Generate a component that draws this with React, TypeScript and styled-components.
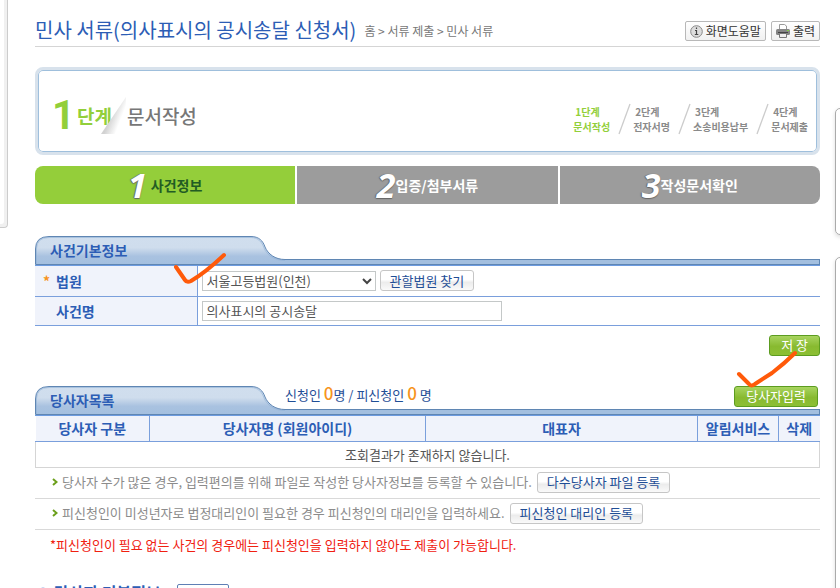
import React from "react";
import styled, { createGlobalStyle, css } from "styled-components";

const GlobalStyle = createGlobalStyle`
  * { box-sizing: border-box; }
  body {
    margin: 0;
    background: #fff;
    color: #555;
    font: 13px/18px "Noto Sans CJK KR", sans-serif;
  }
  button, input, select { font-family: inherit; }
  h1, h2, p, ol, ul { margin: 0; padding: 0; }
  ol, ul { list-style: none; }
`;

const Page = styled.div`
  display: grid;
  grid-template-columns: 8px minmax(0, 1fr) 5px;
  height: 100vh;
  overflow: hidden;
`;

const LeftRail = styled.aside`
  height: 228px;
  border: solid #ccc;
  border-width: 0 1px 1px 0;
  border-radius: 0 0 4px 0;
  box-shadow: inset -3px -3px 0 #f0f0f0;
`;

const RightRail = styled.aside`
  display: flex;
  flex-direction: column;
  gap: 22px;
  padding-top: 108px;
`;

const RailCard = styled.div<{ $fill?: boolean }>`
  width: 40px;
  height: 127px;
  border: 1px solid #aaa;
  border-radius: 5px;
  box-shadow: 0 2px 4px #ddd;
  ${(p) => p.$fill && css`flex: 1 0 340px;`}
`;

const Main = styled.main`
  min-width: 0;
  padding: 0 15px 0 27px;
`;

const TitleBar = styled.header`
  display: flex;
  align-items: center;
  height: 47px;
  padding-top: 14px;
  border-bottom: 1px solid #d5d5d5;
  white-space: nowrap;
`;

const Title = styled.h1`
  color: #2c5db5;
  font-size: 20px;
  font-weight: 400;
  line-height: 28px;
`;

const Crumbs = styled.nav`
  flex: 1;
  margin: 2px 0 0 8px;
  color: #777;
  font-size: 12px;
`;

const Tools = styled.div`
  display: flex;
  gap: 5px;
  padding-top: 2px;
`;

const ToolButton = styled.button`
  display: flex;
  align-items: center;
  gap: 3px;
  height: 20px;
  padding: 0 4px;
  border: 1px solid #b8b8b8;
  border-radius: 2px;
  background: linear-gradient(#fff, #f1f1f1);
  color: #333;
  font-size: 12px;
  line-height: 18px;
  white-space: nowrap;
`;

const StepPanel = styled.section`
  display: flex;
  align-items: center;
  justify-content: space-between;
  height: 88px;
  margin-top: 20px;
  padding: 10px 9px 0 14px;
  border: 3px solid #d8e2ec;
  border-radius: 8px;
  box-shadow: inset 0 0 0 1px #9fbfdc;
  white-space: nowrap;
`;

const CurrentStep = styled.div`
  display: flex;
  align-items: center;
  color: #777;
  font-size: 19px;
  font-weight: 500;
  line-height: 36px;
`;

const StepNumber = styled.span`
  margin-right: 2px;
  color: #92cf3a;
  font: 700 40px/36px Roboto, sans-serif;
`;

const StepWord = styled.strong`
  color: #92cf3a;
  font-weight: 700;
`;

const Fold = styled.svg`
  margin-left: -11px;
`;

const StepList = styled.ol`
  display: flex;
  align-items: center;
  padding-top: 6px;
`;

const StepDivider = styled.li`
  display: flex;
  padding: 0 2px 0 8px;
`;

const StepItem = styled.li<{ $active?: boolean }>`
  color: ${(p) => (p.$active ? "#92cf3a" : "#8a8a8a")};
  font-size: 10px;
  font-weight: 700;
  line-height: 15px;

  span { display: block; padding-left: 2px; }
`;

const WizardTabs = styled.nav`
  display: grid;
  grid-template-columns: repeat(3, 1fr);
  gap: 2px;
  margin-top: 11px;
`;

const WizardTab = styled.a<{ $active?: boolean }>`
  display: flex;
  align-items: center;
  justify-content: center;
  height: 38px;
  background: ${(p) => (p.$active ? "#94ce3a" : "#9c9c9c")};
  color: ${(p) => (p.$active ? "#225c24" : "#fff")};
  font-size: 14px;
  font-weight: 700;
  text-decoration: none;
  white-space: nowrap;

  &:first-child { border-radius: 8px 0 0 8px; }
  &:last-child { border-radius: 0 8px 8px 0; }
`;

const WizardNumber = styled.span<{ $wide?: boolean }>`
  margin-right: ${(p) => (p.$wide ? 4 : 0)}px;
  color: #fff;
  font: italic 700 34px/38px "Open Sans", sans-serif;
  text-shadow: -1px 0 1px #666, 0 1px 1px #666;
`;

const FirstSection = styled.section`
  margin-top: 32px;
`;

const SectionHead = styled.div`
  display: flex;
  height: 30px;
  border-bottom: 1px solid #6c9be0;
`;

const TabLabel = styled.div`
  position: relative;
  flex: none;
  width: 250px;

  svg { position: absolute; inset: 0; }
`;

const TabTitle = styled.h2`
  position: relative;
  padding: 5px 0 0 15px;
  color: #2c5db5;
  font-size: 14px;
  font-weight: 700;
  line-height: 18px;
`;

const HeadSide = styled.div`
  position: relative;
  display: flex;
  flex: 1;
  flex-direction: column;
  justify-content: flex-end;
  min-width: 0;
`;

const HeadRow = styled.div`
  display: flex;
  align-items: flex-start;
  justify-content: space-between;
  height: 23px;
  padding-right: 2px;
  color: #1f4e96;
  line-height: 14px;

  b { color: #f7941d; font-size: 17px; font-weight: 500; }
`;

const HeadBar = styled.div`
  height: 6px;
  border: solid #5f86b3;
  border-width: 1px 1px 1px 0;
  background: #a3bfdf;
`;

const FormTable = styled.table`
  width: 100%;
  border-collapse: collapse;

  th {
    width: 162px;
    padding: 0 0 0 8px;
    border-right: 1px solid #7a9fdc;
    border-bottom: 1px solid #7a9fdc;
    background: #f0f3fb;
    color: #2c5db5;
    font-size: 14px;
    font-weight: 700;
    text-align: left;
  }
  td {
    height: 30px;
    padding: 0 0 0 4px;
    border-bottom: 1px solid #7a9fdc;
  }
  tr + tr td { height: 29px; }
`;

const Mark = styled.span`
  display: inline-block;
  width: 13px;
  color: #f7941d;
`;

const Field = styled.div`
  position: relative;
  display: flex;
  align-items: center;
  gap: 4px;
`;

const fieldBox = css`
  height: 20px;
  border: 1px solid #c4c8c8;
  border-radius: 0;
  background: #fff;
  color: #555;
  font-size: 13px;
`;

const SelectWrap = styled.div`
  position: relative;
  width: 174px;

  svg { position: absolute; right: 4px; top: 7px; pointer-events: none; }
`;

const CourtSelect = styled.select`
  ${fieldBox}
  appearance: none;
  display: block;
  width: 100%;
  padding: 0 4px;
  line-height: 18px;
`;

const NameInput = styled.input`
  ${fieldBox}
  width: 300px;
  padding: 0 4px;
`;

const PlainButton = styled.button`
  height: 21px;
  padding: 0 9px;
  border: 1px solid #c6c6c6;
  border-radius: 3px;
  background: linear-gradient(#fff 0 45%, #ececec 60%, #fafafa);
  color: #1f4e96;
  font-size: 13px;
  line-height: 18px;
  white-space: nowrap;
`;

const GreenButton = styled.button`
  height: 21px;
  padding: 0 11px;
  border: 1px solid #5c9c20;
  border-radius: 3px;
  background: linear-gradient(#a8d460, #88ba30 55%, #8cbf34);
  color: #fff;
  font-size: 13px;
  line-height: 18px;
  white-space: nowrap;
`;

const SaveRow = styled.div`
  display: flex;
  justify-content: flex-end;
  height: 60px;
  padding-top: 9px;
`;

const Tick = styled.svg`
  position: absolute;
  z-index: 2;
  overflow: visible;
  pointer-events: none;
  fill: none;
  stroke: #ff5a0a;
  stroke-width: 4px;
  stroke-linecap: round;
  stroke-linejoin: round;
`;

const CourtTick = styled(Tick)`
  left: -28px;
  top: -18px;
`;

const EntryTick = styled(Tick)`
  right: 23px;
  top: -35px;
`;

const PartyTable = styled.table`
  width: 100%;
  table-layout: fixed;
  border-collapse: collapse;

  th {
    height: 26px;
    padding: 0;
    border-bottom: 1px solid #7a9fdc;
    background: #f0f3fb;
    color: #2c5db5;
    font-size: 14px;
    font-weight: 700;
    white-space: nowrap;
  }
  th + th { border-left: 1px solid #7a9fdc; }
  td {
    height: 26px;
    padding: 0;
    border: 1px solid #d5d5d5;
    border-top: 0;
    text-align: center;
  }
`;

const Hint = styled.li`
  display: flex;
  align-items: center;
  height: 31px;
  padding: 0 0 2px 17px;
  border-bottom: 1px solid #d9d9d9;
  color: #8c8c8c;
  white-space: nowrap;

  svg { margin-right: 4px; }
  button { margin-left: 5px; }
`;

const Notice = styled.p`
  padding: 6px 0 0 15px;
  color: #f02010;
`;

const NextSection = styled.div`
  display: flex;
  align-items: flex-start;
  gap: 16px;
  margin-top: 27px;
  padding-left: 3px;
  color: #2c5db5;
`;

const NextTitle = styled.h2`
  display: flex;
  align-items: center;
  gap: 6px;
  font-size: 16px;
  font-weight: 700;
  line-height: 22px;
`;

const SmallButton = styled.button`
  width: 52px;
  height: 20px;
  margin-top: 3px;
  border: 1px solid #5f7fb5;
  border-radius: 2px;
  background: #fff;
`;

function Slash() {
  return (
    <svg width="13" height="32" viewBox="0 0 13 32" aria-hidden="true">
      <path d="M1 31 L12 1" stroke="#ccc" strokeWidth="1.300" />
    </svg>
  );
}

function TabShape({ id }: { id: string }) {
  return (
    <svg width="250" height="29" viewBox="0 0 250 29" aria-hidden="true">
      <defs>
        <linearGradient id={id} x1="0" y1="0" x2="0" y2="1">
          <stop offset="0" stopColor="#d0deee" />
          <stop offset="0.4" stopColor="#cfdded" />
          <stop offset="0.7" stopColor="#a9c2e0" />
          <stop offset="1" stopColor="#a3bfdf" />
        </linearGradient>
      </defs>
      <path
        d="M.5 28.500 V13 Q.5 .5 14 .5 H216 C224 .5 228 5 230 11 C233 18 240 23.500 250 23.500 V28.500 Z"
        fill={`url(#${id})`}
      />
      <path
        d="M1.500 28 V13 Q1.500 1.500 14 1.500 H216 C223 1.500 227 6 229 12 C232 19 239 24.500 250 24.500"
        fill="none"
        stroke="#8fb0d6"
        strokeOpacity="0.6"
      />
      <path
        d="M250 28.500 H.5 V13 Q.5 .5 14 .5 H216 C224 .5 228 5 230 11 C233 18 240 23.500 250 23.500"
        fill="none"
        stroke="#5f86b3"
      />
    </svg>
  );
}

function Arrow() {
  return (
    <svg width="6" height="8" viewBox="0 0 6 8" aria-hidden="true">
      <path d="M1 1 L4.500 4 L1 7" fill="none" stroke="#6ca01c" strokeWidth="2" />
    </svg>
  );
}

const steps = ["문서작성", "전자서명", "소송비용납부", "문서제출"];
const wizard = ["사건정보", "입증/첨부서류", "작성문서확인"];

export default function App() {
  return (
    <>
      <GlobalStyle />
      <Page>
        <LeftRail />
        <Main>
          <TitleBar>
            <Title>민사 서류(의사표시의 공시송달 신청서)</Title>
            <Crumbs>홈 &gt; 서류 제출 &gt; 민사 서류</Crumbs>
            <Tools>
              <ToolButton>
                <svg width="13" height="13" viewBox="0 0 13 13" aria-hidden="true">
                  <circle cx="6.500" cy="6.500" r="5.800" fill="#ddd" stroke="#888" />
                  <path d="M6.500 2.500v1.500M5 5.500h1.500v4M4.800 9.500h3.500" fill="none" stroke="#444" strokeWidth="1.200" />
                </svg>
                화면도움말
              </ToolButton>
              <ToolButton>
                <svg width="14" height="14" viewBox="0 0 14 14" aria-hidden="true">
                  <path d="M3.500 6V.5h5L10.500 2v4" fill="#fff" stroke="#999" />
                  <rect y="5" width="14" height="6" rx="1.500" fill="#858585" />
                  <path d="M2 8.500h10" stroke="#444" />
                  <path d="M3.500 9.500h7v4h-7z" fill="#eee" stroke="#777" />
                  <path d="M11 6.500h2" stroke="#7fd040" />
                </svg>
                출력
              </ToolButton>
            </Tools>
          </TitleBar>

          <StepPanel>
            <CurrentStep>
              <StepNumber>1</StepNumber>
              <StepWord>단계</StepWord>
              <Fold width="26" height="38" viewBox="0 0 26 38" aria-hidden="true">
                <defs>
                  <linearGradient id="fold" x1="0.450" y1="0.400" x2="0.800" y2="0.600">
                    <stop offset="0" stopColor="#d2d2d2" />
                    <stop offset="1" stopColor="#fff" />
                  </linearGradient>
                </defs>
                <path d="M0 37 L25 0 V37 Z" fill="url(#fold)" />
              </Fold>
              문서작성
            </CurrentStep>
            <StepList>
              {steps.map((name, i) => (
                <React.Fragment key={name}>
                  {i > 0 && <StepDivider><Slash /></StepDivider>}
                  <StepItem $active={i === 0}>
                    <span>{i + 1}단계</span>
                    {name}
                  </StepItem>
                </React.Fragment>
              ))}
            </StepList>
          </StepPanel>

          <WizardTabs>
            {wizard.map((name, i) => (
              <WizardTab key={name} href={`#part${i + 1}`} $active={i === 0}>
                <WizardNumber $wide={i === 0}>{i + 1}</WizardNumber>
                {name}
              </WizardTab>
            ))}
          </WizardTabs>

          <FirstSection>
            <SectionHead>
              <TabLabel>
                <TabShape id="tabCase" />
                <TabTitle>사건기본정보</TabTitle>
              </TabLabel>
              <HeadSide><HeadBar /></HeadSide>
            </SectionHead>
            <FormTable>
              <tbody>
                <tr>
                  <th scope="row"><Mark>*</Mark><label htmlFor="court">법원</label></th>
                  <td>
                    <Field>
                      <SelectWrap>
                        <CourtSelect id="court"><option>서울고등법원(인천)</option></CourtSelect>
                        <svg width="10" height="7" viewBox="0 0 10 7" aria-hidden="true">
                          <path d="M1 1l4 4 4-4" fill="none" stroke="#444" strokeWidth="2" />
                        </svg>
                      </SelectWrap>
                      <PlainButton>관할법원 찾기</PlainButton>
                      <CourtTick width="52" height="34">
                        <path d="M2 15 L11 28 Q13 31 17 29 Q32 20 50 3" />
                      </CourtTick>
                    </Field>
                  </td>
                </tr>
                <tr>
                  <th scope="row"><Mark /><label htmlFor="caseName">사건명</label></th>
                  <td><Field><NameInput id="caseName" defaultValue="의사표시의 공시송달" /></Field></td>
                </tr>
              </tbody>
            </FormTable>
          </FirstSection>

          <SaveRow><GreenButton>저 장</GreenButton></SaveRow>

          <SectionHead>
            <TabLabel>
              <TabShape id="tabParty" />
              <TabTitle>당사자목록</TabTitle>
            </TabLabel>
            <HeadSide>
              <HeadRow>
                <span>신청인 <b>0</b>명 / 피신청인 <b>0</b> 명</span>
                <GreenButton>당사자입력</GreenButton>
              </HeadRow>
              <HeadBar />
              <EntryTick width="60" height="38">
                <path d="M2 23 L12 33 Q14 36 18 33 L35 22 Q48 12 58 2" />
              </EntryTick>
            </HeadSide>
          </SectionHead>
          <PartyTable>
            <colgroup>
              <col width="114" />
              <col width="276" />
              <col />
              <col width="81" />
              <col width="41" />
            </colgroup>
            <thead>
              <tr>
                <th>당사자 구분</th>
                <th>당사자명 (회원아이디)</th>
                <th>대표자</th>
                <th>알림서비스</th>
                <th>삭제</th>
              </tr>
            </thead>
            <tbody>
              <tr><td colSpan={5}>조회결과가 존재하지 않습니다.</td></tr>
            </tbody>
          </PartyTable>
          <ul>
            <Hint>
              <Arrow />당사자 수가 많은 경우, 입력편의를 위해 파일로 작성한 당사자정보를 등록할 수 있습니다.
              <PlainButton>다수당사자 파일 등록</PlainButton>
            </Hint>
            <Hint>
              <Arrow />피신청인이 미성년자로 법정대리인이 필요한 경우 피신청인의 대리인을 입력하세요.
              <PlainButton>피신청인 대리인 등록</PlainButton>
            </Hint>
          </ul>
          <Notice>*피신청인이 필요 없는 사건의 경우에는 피신청인을 입력하지 않아도 제출이 가능합니다.</Notice>
          <NextSection>
            <NextTitle>
              <svg width="10" height="10" viewBox="0 0 10 10" aria-hidden="true">
                <circle cx="5" cy="5" r="4.500" fill="#7f9ee0" />
              </svg>
              당사자 기본정보
            </NextTitle>
            <SmallButton aria-label="열기" />
          </NextSection>
        </Main>
        <RightRail>
          <RailCard />
          <RailCard $fill />
        </RightRail>
      </Page>
    </>
  );
}
